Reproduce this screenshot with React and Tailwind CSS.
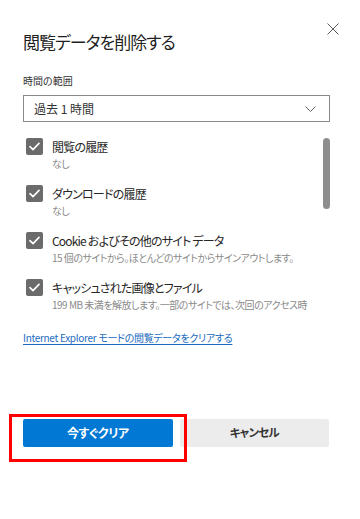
import React from "react";

function Check() {
  return (
    <div className="w-[17px] h-[17px] shrink-0 rounded-[2px] bg-[#6b6b6b] flex items-center justify-center">
      <svg width="11" height="9" viewBox="0 0 11 9" fill="none">
        <path d="M1 4.6 L4 7.6 L10 1.4" stroke="#fff" strokeWidth="1.6" strokeLinecap="round" strokeLinejoin="round" />
      </svg>
    </div>
  );
}

function Row({ label, sub }) {
  return (
    <div className="flex items-start gap-[9px] pl-[3px]">
      <Check />
      <div className="flex flex-col min-w-0 pr-[18px]">
        <div className="text-[12px] leading-[18px] tracking-[-0.8px] text-[#262626]">{label}</div>
        <div className="text-[10px] leading-[16px] tracking-[-0.5px] text-[#8a8a8a]">{sub}</div>
      </div>
    </div>
  );
}

export default function App() {
  return (
    <div className="relative w-[360px] h-[519px] bg-white font-['Noto_Sans_CJK_JP',sans-serif] [font-feature-settings:'palt'] overflow-hidden">
      <div className="flex justify-between items-start pl-[23px] pr-[21px] pt-[23px]">
        <h1 className="mt-[7px] text-[17px] leading-[24px] tracking-[-1px] text-[#1f1f1f] font-normal">閲覧データを削除する</h1>
        <svg width="12" height="12" viewBox="0 0 12 12" fill="none">
          <path d="M0.5 0.5 L11.5 11.5 M11.5 0.5 L0.5 11.5" stroke="#5a5a5a" strokeWidth="1" />
        </svg>
      </div>
      <div className="pl-[23px] pr-[30px]">
        <div className="mt-[19px] text-[10px] leading-[16px] text-[#333]">時間の範囲</div>
        <div className="mt-[6px] h-[27px] border border-[#8a8a8a] flex items-center justify-between pl-[10px] pr-[13px]">
          <span className="text-[12px] text-[#333]">過去 1 時間</span>
          <svg width="11" height="6" viewBox="0 0 11 6" fill="none">
            <path d="M0.5 0.5 L5.5 5.5 L10.5 0.5" stroke="#666" strokeWidth="1" />
          </svg>
        </div>
        <div className="relative mt-[8px] h-[185px] overflow-hidden pt-[8px]">
          <div className="flex flex-col gap-[13px]">
            <Row label="閲覧の履歴" sub="なし" />
            <Row label="ダウンロードの履歴" sub="なし" />
            <Row label="Cookie およびその他のサイト データ" sub="15 個のサイトから。ほとんどのサイトからサインアウトします。" />
            <Row label="キャッシュされた画像とファイル" sub="199 MB 未満を解放します。一部のサイトでは、次回のアクセス時に読み込みが遅くなる可能性があります。" />
          </div>
          <div className="absolute right-0 top-[8px] w-[7px] h-[71px] rounded-full bg-[#8e8e8e]" />
        </div>
        <a className="block mt-[15px] text-[10px] leading-[16px] tracking-[-0.3px] text-[#1a6bbf] underline underline-offset-2">
          Internet Explorer モードの閲覧データをクリアする
        </a>
        <div className="mt-[73px] flex gap-[7px] pr-[1px]">
          <button className="w-[150px] h-[28px] rounded-[2px] bg-[#0078d4] text-white text-[12px] tracking-[-0.5px] font-semibold">今すぐクリア</button>
          <button className="w-[150px] h-[28px] rounded-[2px] bg-[#ececec] text-[#333] text-[11.5px] tracking-[-0.8px] font-semibold">キャンセル</button>
        </div>
      </div>
      <div className="absolute left-[9px] top-[414px] w-[178px] h-[48px] border-[3px] border-[#ff0000] pointer-events-none" />
    </div>
  );
}
